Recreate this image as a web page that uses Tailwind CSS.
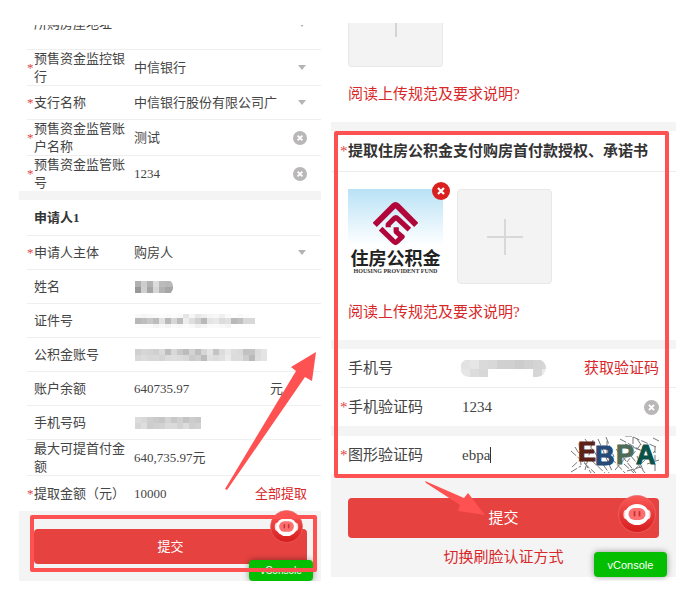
<!DOCTYPE html>
<html lang="zh-CN">

<head>
  <meta charset="UTF-8" />
  <meta name="viewport" content="width=device-width, initial-scale=1" />
  <title>住房公积金提取</title>
  <script src="https://cdn.jsdelivr.net/npm/@tailwindcss/browser@4"></script>
</head>

<body class="bg-white text-[#444] font-['Liberation_Serif','Noto_Sans_CJK_SC',serif]">
  <svg class="absolute size-0" aria-hidden="true">
    <symbol id="clear" viewBox="0 0 14 14">
      <circle cx="7" cy="7" r="7" fill="#b9b7b7" />
      <path d="M4.6 4.6l4.8 4.8M9.4 4.6l-4.8 4.8" stroke="#fff" stroke-width="1.8" />
    </symbol>
    <symbol id="caret" viewBox="0 0 8 5">
      <path d="M0 0h8L4 5z" fill="#b5b3b3" />
    </symbol>
    <linearGradient id="ball" x1="0" y1="0" x2="0" y2="1">
      <stop offset="0" stop-color="#fb5a58" />
      <stop offset="1" stop-color="#d51c1c" />
    </linearGradient>
    <symbol id="robot" viewBox="0 0 38 38">
      <circle cx="19" cy="19" r="18.5" fill="url(#ball)" stroke="#e86a66" stroke-width=".7" />
      <rect x="5.500" y="14.500" width="27" height="10" rx="4" fill="#fbd9d9" />
      <ellipse cx="19" cy="19.500" rx="12" ry="10.500" fill="#fff" />
      <rect x="10.500" y="13" width="17" height="12" rx="6" fill="#fb6f6e" />
      <path d="M16.500 17v3.500M21.500 17v3.500" stroke="#c93232" stroke-width="1.800" stroke-linecap="round" />
    </symbol>
  </svg>

  <main class="grid grid-cols-[302fr_345fr] items-start gap-[10px] pl-[19px] pr-[22px]">

    <!-- Thông tin -->
    <section class="relative mt-[25px] min-w-0 bg-white text-[13px] leading-[18px]">
      <div class="overflow-hidden">
        <div class="ml-2 flex h-6 items-start pr-[15px]">
          <span class="-mt-2.5 w-[7px] text-[#e04545]">*</span>
          <label for="addr" class="-mt-2.5 flex-1">所购房屋地址</label>
          <button id="addr" class="mr-0.5" aria-label="选择"><svg class="h-[2px] w-1"><use href="#caret" /></svg></button>
        </div>
      </div>

      <div class="ml-2 flex h-9 items-center border-t border-[#efefef] pr-[15px]">
        <span class="w-[7px] text-[#e04545]">*</span>
        <label for="bank" class="w-[100px] pr-2">预售资金监控银行</label>
        <input id="bank" class="min-w-0 flex-1" value="中信银行" />
        <svg class="ml-6 h-[5px] w-2"><use href="#caret" /></svg>
      </div>
      <div class="ml-2 flex h-[34px] items-center border-t border-[#efefef] pr-[15px]">
        <span class="w-[7px] text-[#e04545]">*</span>
        <label for="branch" class="w-[100px] pr-2">支行名称</label>
        <input id="branch" class="min-w-0 flex-1" value="中信银行股份有限公司广" />
        <svg class="ml-4 h-[5px] w-2"><use href="#caret" /></svg>
      </div>
      <div class="ml-2 flex h-9 items-center border-t border-[#efefef] pr-[14px]">
        <span class="w-[7px] text-[#e04545]">*</span>
        <label for="accName" class="w-[100px] pr-2">预售资金监管账户名称</label>
        <input id="accName" class="min-w-0 flex-1" value="测试" />
        <button aria-label="清除"><svg class="size-[14px]"><use href="#clear" /></svg></button>
      </div>
      <div class="ml-2 flex h-9 items-center border-t border-[#efefef] pr-[14px]">
        <span class="w-[7px] text-[#e04545]">*</span>
        <label for="accNo" class="w-[100px] pr-2">预售资金监管账号</label>
        <input id="accNo" class="min-w-0 flex-1" value="1234" />
        <button aria-label="清除"><svg class="size-[14px]"><use href="#clear" /></svg></button>
      </div>

      <div class="h-[9px] bg-[#f4f4f4]"></div>
      <h2 class="flex h-[35px] items-center pl-[15px] font-bold text-[#333]">申请人1</h2>

      <div class="ml-2 flex h-[34px] items-center border-t border-[#efefef] pr-[15px]">
        <span class="w-[7px] text-[#e04545]">*</span>
        <label for="subject" class="w-[100px] pr-2">申请人主体</label>
        <input id="subject" class="min-w-0 flex-1" value="购房人" />
        <svg class="ml-6 h-[5px] w-2"><use href="#caret" /></svg>
      </div>
      <div class="ml-2 flex h-[34px] items-center border-t border-[#efefef] pl-[7px]">
        <span class="w-[100px]">姓名</span>
        <svg class="h-[14px] w-[39px] rounded-r-md" data-mosaic="b0cdb2dcbbb8b8|98cfa5d6b2a6a6" data-cell="6"></svg>
      </div>
      <div class="ml-2 flex h-[34px] items-center border-t border-[#efefef] pl-[7px]">
        <span class="w-[100px]">证件号</span>
        <svg class="h-[14px] w-[140px]" data-mosaic="f8f6f8fafcfafcf8e4f6e8eef6f8f0fafefafcfe|b8bec8bce2b8d6bceeded0b8e4e8dce0b9c0d8d8|fcfafaf4f8f4faf8fcf8f0f4fafaf8f4fefefefe" data-cell="6" data-top="-3"></svg>
      </div>
      <div class="ml-2 flex h-[34px] items-center border-t border-[#efefef] pl-[7px]">
        <span class="w-[100px]">公积金账号</span>
        <svg class="h-[14px] w-[140px]" data-mosaic="d0d6d4d0dabcd8c8bcd2bed6e4c4dce8dedac2c4dce4|d8dcd8d8d4dcdedcd8cacfbce0dce0ecdcdccebadee4" data-cell="6"></svg>
      </div>
      <div class="ml-2 flex h-[34px] items-center border-t border-[#efefef] pl-[7px] pr-[38px]">
        <span class="w-[100px]">账户余额</span>
        <span class="flex-1">640735.97</span>
        <span>元</span>
      </div>
      <div class="ml-2 flex h-[34px] items-center border-t border-[#efefef] pl-[7px]">
        <span class="w-[100px]">手机号码</span>
        <svg class="h-[14px] w-[140px]" data-mosaic="dcd8cecac6d4c8d0c4ccc8|d6deccd0d2dadad2dccfd2" data-cell="6"></svg>
      </div>
      <div class="ml-2 flex h-9 items-center border-t border-[#efefef] pl-[7px]">
        <span class="w-[100px] pr-2">最大可提首付金额</span>
        <span>640,735.97元</span>
      </div>
      <div class="ml-2 flex h-9 items-center border-t border-[#efefef] pr-[14px]">
        <span class="w-[7px] text-[#e04545]">*</span>
        <label for="amount" class="w-[100px] whitespace-nowrap">提取金额（元）</label>
        <input id="amount" class="min-w-0 flex-1" value="10000" />
        <button class="text-[#d8282a]">全部提取</button>
      </div>

      <div class="relative h-[70px] bg-[#f4f4f4] pt-[18px] pl-[15px] pr-[14px]">
        <button class="h-[35px] w-full rounded-sm bg-[#e64340] text-white">提交</button>
        <button class="absolute bottom-0 right-2 h-[21px] w-16 rounded-sm bg-[#04be02] text-[10px] leading-5 text-white shadow-[0_0_6px_rgba(0,0,0,.4)] font-['Liberation_Sans',sans-serif]">vConsole</button>
        <button class="absolute right-[18px] -top-px" aria-label="客服"><svg class="size-[33px]"><use href="#robot" /></svg></button>
        <div class="pointer-events-none absolute left-[11px] right-1 top-1 bottom-[9px] rounded-xs border-4 border-[#fd5152]"></div>
      </div>

      <svg class="pointer-events-none absolute bottom-[90px] right-1 h-[139px] w-[92px]" viewBox="0 0 92 139" aria-hidden="true">
        <path d="M91 0L87 29L80 25L2 138L0 137L71 19L66 15Z" fill="#fd5152" />
      </svg>
    </section>

    <!-- Tải lên và xác minh -->
    <section class="mt-[23px] min-w-0 bg-white text-[15px] leading-5">
      <div class="h-[99px] pl-[17px]">
        <div class="flex h-[44px] w-[95px] justify-center rounded-b-sm border border-t-0 border-[#e9e8e8] bg-[#f4f3f4]">
          <span class="h-[14px] w-0.5 bg-[#d4d4d4]"></span>
        </div>
        <a href="#" class="mt-[17px] block text-[#d8282a]">阅读上传规范及要求说明?</a>
      </div>
      <div class="h-[9px] bg-[#f4f4f4]"></div>

      <div class="relative z-10">
        <h2 class="flex h-[41px] items-center border-b border-[#ececec] pl-[9px] font-bold whitespace-nowrap text-[#333]">
          <span class="w-2 font-normal text-[#e04545]">*</span>提取住房公积金支付购房首付款授权、承诺书
        </h2>
        <div class="h-[168px] pl-[17px] pt-[17px]">
          <div class="flex gap-[14px]">
            <div class="relative h-[95px] w-[95px] bg-linear-to-b from-[#b9e2f6] to-white to-60%">
              <svg class="mx-auto mt-3 size-[45px]" viewBox="0 0 130 130" fill="none" stroke="#b1063a" stroke-width="15" stroke-linejoin="round" role="img" aria-label="住房公积金">
                <path d="M5 69L60 14Q65 9 70 14L125 69" stroke-width="17" />
                <path d="M44 76V68L61 51Q66 46 71 51L105 83" />
                <path d="M22 80L60 117Q65 122 70 117L84 103L67 89V76" />
              </svg>
              <div class="mt-1 text-center text-[18px] leading-[18px] font-bold whitespace-nowrap text-[#222]">住房公积金</div>
              <div class="text-center text-[6px] leading-[6px] font-bold whitespace-nowrap text-[#333]">HOUSING PROVIDENT FUND</div>
              <button class="absolute -right-[7px] -top-[7px]" aria-label="删除">
                <svg class="size-[18px]" viewBox="0 0 18 18">
                  <circle cx="9" cy="9" r="9" fill="#d9201f" />
                  <path d="M6 6l6 6M12 6l-6 6" stroke="#fff" stroke-width="2.200" />
                </svg>
              </button>
            </div>
            <button class="flex h-[95px] w-[95px] items-center justify-center rounded-sm border border-[#e9e8e8] bg-[#f4f3f4]" aria-label="上传">
              <svg class="size-9" viewBox="0 0 36 36"><path d="M18 0v36M0 18h36" stroke="#d8d8d8" stroke-width="2" /></svg>
            </button>
          </div>
          <a href="#" class="mt-[18px] block text-[#d8282a]">阅读上传规范及要求说明?</a>
        </div>

        <div class="h-[9px] bg-[#f4f4f4]"></div>
        <div class="ml-[9px] flex h-[38px] items-center pl-2 pr-[17px]">
          <span class="w-[112px]">手机号</span>
          <svg class="h-[18px] w-[86px] rounded-full" data-mosaic="e2e6dad8d0d0ccd0d4d6|e6dcd8ffffffffffd6ea" data-cell="9"></svg>
          <button class="ml-auto text-[#d8282a]">获取验证码</button>
        </div>
        <div class="ml-[9px] flex h-[39px] items-center border-t border-[#ececec] pr-[17px]">
          <span class="w-2 text-[#e04545]">*</span>
          <label for="sms" class="w-[114px]">手机验证码</label>
          <input id="sms" class="min-w-0 flex-1" value="1234" />
          <button aria-label="清除"><svg class="size-[15px]"><use href="#clear" /></svg></button>
        </div>
        <div class="h-[10px] bg-[#f4f4f4]"></div>
        <div class="ml-[9px] flex h-[38px] items-center pr-[17px]">
          <span class="w-2 text-[#e04545]">*</span>
          <label for="captcha" class="w-[114px]">图形验证码</label>
          <div class="flex min-w-0 flex-1 items-center">
            <input id="captcha" class="w-[28px]" value="ebpa" />
            <span class="h-4 w-px bg-[#333]"></span>
          </div>
          <svg class="h-[38px] w-[88px]" viewBox="0 0 88 38" role="img" aria-label="EBPA">
            <g stroke="#777" stroke-width="1" fill="none">
              <path d="M0 15l24 22M4 11l16 26M1 31l13-12M0 36l10-6M14 3l10 14M8 7l2 22M22 14l16 23M27 3l14 32M20 24l14 13M35 1l8 20M49 3l22 12M54 8l20 8M54 0h8v8M62 1l23 10M66 3l10 14M82 2l6 3M45 13l20 24M40 22l14 15M60 20l14 17M53 28l10 9M66 20l6 14M62 35l22-20M84 10v27M56 35l14-4M22 4l-8 30M76 28l12-4M36 5v16M70 8l-14 18M44 34l12-14" stroke-dasharray="7 2" />
            </g>
            <g class="font-['Liberation_Sans',sans-serif] font-bold" font-size="27" stroke-width="1">
              <text x="7" y="25" fill="#5d2217" stroke="#5d2217">E</text>
              <text x="24" y="29" fill="#264a78" stroke="#264a78">B</text>
              <text x="45" y="28" fill="#4d6b56" stroke="#4d6b56">P</text>
              <text x="65" y="28" fill="#0a5148" stroke="#0a5148">A</text>
            </g>
          </svg>
        </div>
        <div class="pointer-events-none absolute left-[3px] right-[7px] top-0 -bottom-1 rounded-xs border-4 border-[#fd5152]"></div>
      </div>

      <div class="relative h-[103px] bg-[#f4f4f4] pl-[17px] pr-[17px] pt-6 text-center">
        <button class="h-10 w-full rounded-sm bg-[#e64340] text-white">提交</button>
        <a href="#" class="mt-[9px] inline-block text-[#d8282a]">切换刷脸认证方式</a>
        <button class="absolute bottom-0 right-[9px] h-[25px] w-[73px] rounded-sm bg-[#04be02] text-[11px] text-white shadow-[0_0_6px_rgba(0,0,0,.4)] font-['Liberation_Sans',sans-serif]">vConsole</button>
        <button class="absolute right-5 top-[21px]" aria-label="客服"><svg class="size-[38px]"><use href="#robot" /></svg></button>
        <svg class="pointer-events-none absolute left-[94px] top-[7px] h-[36px] w-[61px]" viewBox="0 0 61 36" aria-hidden="true">
          <path d="M0 0L1 2L35 24L33 30L60 34L43 12L39 17Z" fill="#fd5152" />
        </svg>
      </div>
    </section>
  </main>

  <script>
    // each pair of hex digits is one grey cell, rows are split by |
    document.querySelectorAll('[data-mosaic]').forEach((svg) => {
      const size = Number(svg.dataset.cell);
      const top = Number(svg.dataset.top || 0);
      svg.dataset.mosaic.split('|').forEach((row, y) => {
        row.match(/../g).forEach((grey, x) => {
          const rect = document.createElementNS('http://www.w3.org/2000/svg', 'rect');
          rect.setAttribute('x', 1 + x * size);
          rect.setAttribute('y', 1 + top + y * size);
          rect.setAttribute('width', size);
          rect.setAttribute('height', size);
          rect.setAttribute('fill', '#' + grey + grey + grey);
          svg.appendChild(rect);
        });
      });
    });
  </script>
</body>

</html>
